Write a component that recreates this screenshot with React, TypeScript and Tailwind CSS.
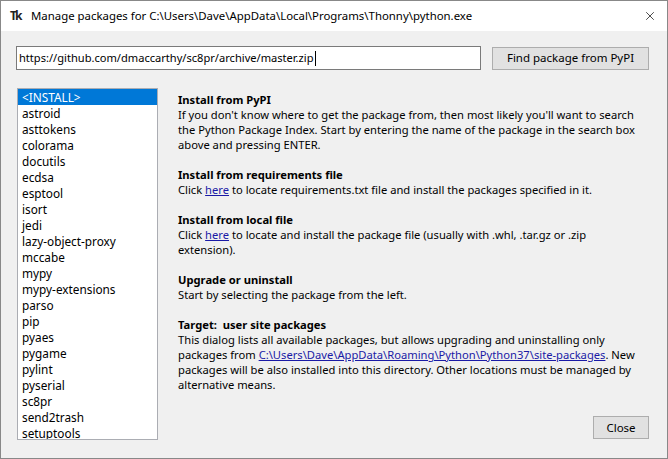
import { X } from "lucide-react";

const packages = [
  "<INSTALL>",
  "astroid",
  "asttokens",
  "colorama",
  "docutils",
  "ecdsa",
  "esptool",
  "isort",
  "jedi",
  "lazy-object-proxy",
  "mccabe",
  "mypy",
  "mypy-extensions",
  "parso",
  "pip",
  "pyaes",
  "pygame",
  "pylint",
  "pyserial",
  "sc8pr",
  "send2trash",
  "setuptools",
];

function Link({ children }: { children: React.ReactNode }) {
  return <span className="text-[#1a1aa6] underline underline-offset-1">{children}</span>;
}

export default function App() {
  return (
    <div className="flex h-[459px] w-[668px] flex-col border border-[#888888] bg-[#f0f0f0] font-['Segoe_UI','Noto_Sans',sans-serif] text-[12px] text-black">
      {/* title bar */}
      <div className="flex h-[30px] shrink-0 items-center bg-white pl-[9px]">
        <span className="w-[21px] text-[12px] font-bold leading-none tracking-[-2px] text-[#222]">Tk</span>
        <span className="text-[11.4px] leading-none">
          Manage packages for C:\Users\Dave\AppData\Local\Programs\Thonny\python.exe
        </span>
        <X className="ml-auto mr-[10px] h-[14px] w-[14px] text-black" strokeWidth={1.2} />
      </div>

      <div className="flex flex-1 flex-col px-[15px] pt-[15px]">
        {/* url row */}
        <div className="flex items-center gap-[11px]">
          <div className="flex h-[24px] w-[465px] items-center border border-[#7a7a7a] bg-white pl-[2px]">
            <span className="whitespace-nowrap text-[11.1px]">https://github.com/dmaccarthy/sc8pr/archive/master.zip</span>
            <span className="ml-[1px] h-[15px] w-[1px] bg-black" />
          </div>
          <button className="flex h-[23px] w-[157px] items-center justify-center border border-[#adadad] bg-[#e1e1e1] text-[11.5px]">
            Find package from PyPI
          </button>
        </div>

        <div className="mt-[18px] flex gap-[20px]">
          {/* package list */}
          <div className="ml-[1px] h-[352px] w-[141px] shrink-0 overflow-hidden border border-[#abadb3] bg-white text-[11.8px]">
            {packages.map((p, i) => (
              <div
                key={p}
                className={
                  i === 0
                    ? "h-[16px] bg-[#0078d7] pl-[4px] leading-[16px] text-white"
                    : "h-[16px] pl-[4px] leading-[16px]"
                }
              >
                {p}
              </div>
            ))}
          </div>

          {/* help text */}
          <div className="flex flex-1 flex-col whitespace-nowrap pt-[4px] text-[11.2px] leading-[15px]">
            <div className="font-bold">Install from PyPI</div>
            <div>If you don't know where to get the package from, then most likely you'll want to search</div>
            <div>the Python Package Index. Start by entering the name of the package in the search box</div>
            <div>above and pressing ENTER.</div>

            <div className="mt-[15px] font-bold">Install from requirements file</div>
            <div>
              Click <Link>here</Link> to locate requirements.txt file and install the packages specified in it.
            </div>

            <div className="mt-[15px] font-bold">Install from local file</div>
            <div>
              Click <Link>here</Link> to locate and install the package file (usually with .whl, .tar.gz or .zip
            </div>
            <div>extension).</div>

            <div className="mt-[15px] font-bold">Upgrade or uninstall</div>
            <div>Start by selecting the package from the left.</div>

            <div className="mt-[15px] font-bold">Target:&nbsp; user site packages</div>
            <div>This dialog lists all available packages, but allows upgrading and uninstalling only</div>
            <div>
              packages from <Link>C:\Users\Dave\AppData\Roaming\Python\Python37\site-packages</Link>. New
            </div>
            <div>packages will be also installed into this directory. Other locations must be managed by</div>
            <div>alternative means.</div>

            <button className="mt-auto mr-[3px] mb-[1px] flex h-[23px] w-[56px] items-center justify-center self-end border border-[#adadad] bg-[#e1e1e1] text-[11.5px]">
              Close
            </button>
          </div>
        </div>
      </div>
    </div>
  );
}
